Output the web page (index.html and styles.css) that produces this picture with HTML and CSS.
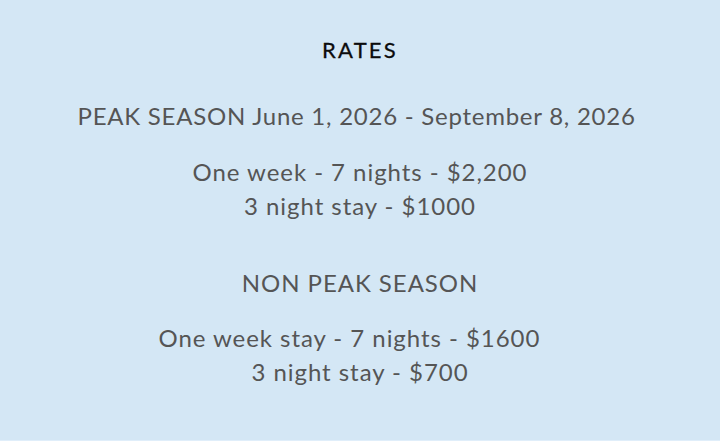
FILE: index.html
```html
<!DOCTYPE html>
<html>
<head>
<meta charset="utf-8">
<link rel="stylesheet" href="styles.css">
</head>
<body>
<main class="rates">
  <h1 class="title">RATES</h1>
  <p class="season">PEAK SEASON June 1, 2026 - September 8, 2026&nbsp;</p>
  <div class="prices">
    <p>One week - 7 nights - $2,200</p>
    <p>3 night stay - $1000</p>
  </div>
  <p class="season season-2">NON PEAK SEASON</p>
  <div class="prices prices-2">
    <p>One week stay - 7 nights - $1600&nbsp;&nbsp;&nbsp;</p>
    <p>3 night stay - $700</p>
  </div>
</main>
</body>
</html>
```

FILE: styles.css
```css
html, body {
  margin: 0;
  padding: 0;
}
body {
  width: 720px;
  height: 441px;
  background: #d4e7f5;
  font-family: "Lato", "Liberation Sans", sans-serif;
  color: #555555;
  box-sizing: border-box;
  border-bottom: 1px solid #e0eefa;
}
.rates {
  display: flex;
  flex-direction: column;
  align-items: center;
  text-align: center;
  padding-top: 36px;
}
.title {
  margin: 0;
  font-size: 22px;
  line-height: 28px;
  font-weight: 400;
  letter-spacing: 2.2px;
  color: #0c0c0c;
  -webkit-text-stroke: 0.3px #0c0c0c;
}
.season {
  margin: 0;
  margin-top: 35px;
  font-size: 24px;
  line-height: 34px;
  letter-spacing: 0.75px;
}
.season-2 {
  margin-top: 43px;
  letter-spacing: 0.95px;
}
.prices {
  margin-top: 22px;
}
.prices-2 {
  margin-top: 21px;
}
.prices p {
  margin: 0;
  font-size: 24px;
  line-height: 34px;
  letter-spacing: 0.95px;
}
```
